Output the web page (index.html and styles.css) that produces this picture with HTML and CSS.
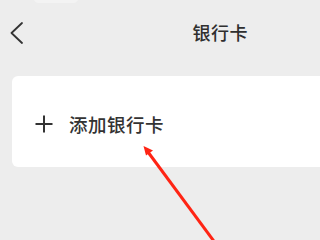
FILE: index.html
```html
<!DOCTYPE html>
<html lang="zh-CN">
<head>
<meta charset="UTF-8">
<meta name="viewport" content="width=device-width, initial-scale=1.0">
<title>银行卡</title>
<link rel="stylesheet" href="styles.css">
</head>
<body>

<div class="page">
  <div class="status-blob"></div>

  <div class="nav">
    <button class="back" aria-label="返回">
      <svg width="14" height="22" viewBox="0 0 14 22">
        <polyline points="12,1 1.5,11 12,21" fill="none" stroke="#333" stroke-width="1.8" stroke-linecap="round" stroke-linejoin="round"/>
      </svg>
    </button>
    <div class="nav-title">银行卡</div>
    <div></div>
  </div>

  <!-- card continues past the right edge of the crop -->
  <div class="card">
    <div class="add-row">
      <svg class="plus" width="18" height="18" viewBox="0 0 18 18">
        <path d="M9 0.5V17.5M0.5 9H17.5" stroke="#333" stroke-width="2"/>
      </svg>
      <span class="add-text">添加银行卡</span>
    </div>
  </div>
</div>

<!-- red annotation arrow drawn over the screenshot -->
<svg class="mark" width="320" height="240" viewBox="0 0 320 240">
  <line x1="148" y1="152" x2="216" y2="244" stroke="#ff2414" stroke-width="3"/>
  <polygon points="143.5,146 153,150.5 146,155.5" fill="#ff2414"/>
</svg>

</body>
</html>
```

FILE: styles.css
```css
body {
  margin: 0;
  width: 320px;
  height: 240px;
  overflow: hidden;
  background-color: #ededed;
  font-family: "Noto Sans CJK SC", "Noto Sans", sans-serif;
  color: #333;
  position: relative;
}
.status-blob {
  position: absolute;
  top: -6px;
  left: 34px;
  width: 44px;
  height: 9px;
  border-radius: 6px;
  background: #f3f3f3;
}
.nav {
  display: grid;
  grid-template-columns: 1fr auto 72px;
  align-items: center;
  height: 64px;
}
.back {
  justify-self: start;
  background: none;
  border: none;
  padding: 0 0 0 10px;
  margin-top: 1px;
  display: flex;
}
.nav-title {
  font-size: 18px;
  font-weight: 500;
  letter-spacing: 0.5px;
  color: #2f2f2f;
}
.card {
  margin: 12px 0 0 12px;
  height: 91px;
  background: #fff;
  border-radius: 6px 0 0 6px;
  display: flex;
  align-items: center;
}
.add-row {
  display: flex;
  align-items: center;
  padding-left: 23px;
  margin-top: 5px;
}
.plus {
  margin-right: 16px;
}
.add-text {
  font-size: 18.5px;
  font-weight: 500;
  letter-spacing: 0.5px;
  color: #333;
}
.mark {
  position: absolute;
  top: 0;
  left: 0;
}
```
